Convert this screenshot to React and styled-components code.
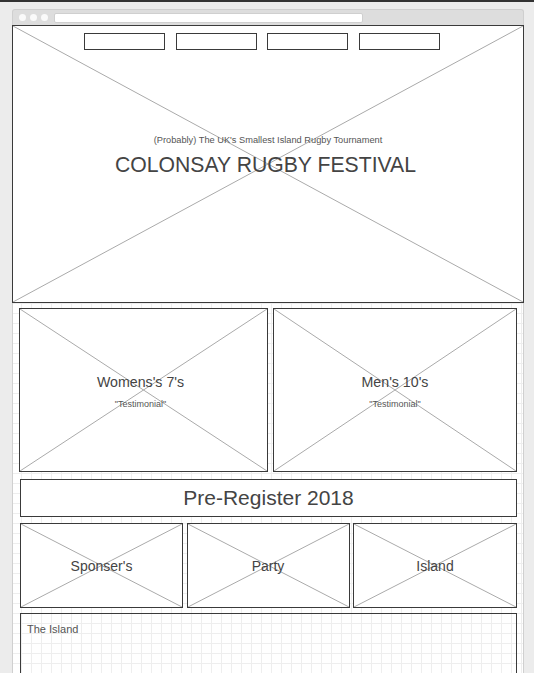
import React from "react";
import styled, { createGlobalStyle } from "styled-components";

const Global = createGlobalStyle`
  html, body {
    margin: 0;
    padding: 0;
    background: #ececec;
  }
  body {
    font-family: "Liberation Sans", Arial, sans-serif;
    color: #444;
  }
`;

const Page = styled.div`
  border-top: 2px solid #333;
  padding: 7px 10px 0 12px;
  height: 673px;
  overflow: hidden;
  box-sizing: border-box;
`;

const Frame = styled.div`
  width: 512px;
  display: flex;
  flex-direction: column;
`;

const TitleBar = styled.div`
  height: 16px;
  box-sizing: border-box;
  background: #dddddd;
  border: 1px solid #cfcfcf;
  border-bottom: none;
  border-radius: 3px 3px 0 0;
  display: flex;
  align-items: center;
  padding-left: 6px;
  gap: 4px;
`;

const Dot = styled.span`
  width: 7px;
  height: 7px;
  border-radius: 50%;
  background: #fafafa;
`;

const Address = styled.div`
  margin-left: 2px;
  width: 309px;
  height: 10px;
  background: #fff;
  border: 1px solid #cfcfcf;
  border-radius: 2px;
  box-sizing: border-box;
`;

const Hero = styled.div`
  position: relative;
  height: 278px;
  box-sizing: border-box;
  border: 1px solid #3a3a3a;
  background: #fff;
  display: flex;
  flex-direction: column;
`;

const CrossSvg = styled.svg`
  position: absolute;
  inset: 0;
  width: 100%;
  height: 100%;
  pointer-events: none;
`;

const Cross = () => (
  <CrossSvg preserveAspectRatio="none" viewBox="0 0 100 100">
    <line x1="0" y1="0" x2="100" y2="100" stroke="#aaa" strokeWidth="1" vectorEffect="non-scaling-stroke" />
    <line x1="100" y1="0" x2="0" y2="100" stroke="#aaa" strokeWidth="1" vectorEffect="non-scaling-stroke" />
  </CrossSvg>
);

const Nav = styled.div`
  position: relative;
  display: flex;
  gap: 10.7px;
  padding: 7px 0 0 71px;
`;

const NavBox = styled.div`
  width: 81px;
  height: 17px;
  box-sizing: border-box;
  border: 1px solid #3a3a3a;
  background: #fff;
`;

const HeroText = styled.div`
  position: relative;
  margin-top: 85px;
  display: flex;
  flex-direction: column;
  align-items: center;
  gap: 6px;
`;

const Tagline = styled.div`
  font-size: 9.25px;
  line-height: 11px;
  color: #555;
`;

const Title = styled.h1`
  margin: 0;
  padding-right: 5px;
  font-weight: normal;
  font-size: 21.2px;
  line-height: 26px;
  color: #444;
`;

const Content = styled.div`
  border-left: 1px solid #d0d0d0;
  border-right: 1px solid #d0d0d0;
  background-color: #fff;
  background-image:
    linear-gradient(to right, #eeeeee 1px, transparent 1px),
    linear-gradient(to bottom, #eeeeee 1px, transparent 1px);
  background-size: 10px 10px;
  background-position: 8px 0;
  padding: 5px 6px 0;
  display: flex;
  flex-direction: column;
  gap: 7px;
  height: 400px;
`;

const TwoCol = styled.div`
  display: grid;
  grid-template-columns: 249px 244px;
  gap: 5px;
`;

const Box = styled.div`
  position: relative;
  box-sizing: border-box;
  border: 1px solid #3a3a3a;
  background: ${p => (p.$clear ? "transparent" : "#fff")};
  height: ${p => p.$h}px;
  display: flex;
  flex-direction: column;
  align-items: center;
  justify-content: center;
  padding-right: ${p => p.$shift || 0}px;
`;

const CardTitle = styled.div`
  position: relative;
  font-size: 14.2px;
  line-height: 17px;
  color: #444;
  margin-top: 2px;
`;

const Testimonial = styled.div`
  position: relative;
  font-size: 9px;
  line-height: 10px;
  color: #555;
  margin-top: 8px;
`;

const Lower = styled.div`
  margin-left: 1px;
  display: flex;
  flex-direction: column;
  gap: 6px;
`;

const Banner = styled(Box)`
  font-size: 21px;
  color: #444;
`;

const ThreeCol = styled.div`
  display: grid;
  grid-template-columns: 163px 163px 164px;
  gap: 4px 3.5px;
`;

const TileLabel = styled.div`
  position: relative;
  font-size: 14px;
  color: #444;
`;

const Section = styled(Box)`
  align-items: flex-start;
  justify-content: flex-start;
  padding: 9px 6px;
  margin-top: -1px;
`;

const SectionLabel = styled.div`
  font-size: 11px;
  color: #555;
`;

const cards = [
  { title: "Womens's 7's", shift: 6 },
  { title: "Men's 10's", shift: 0 }
];

const tiles = ["Sponser's", "Party", "Island"];

export default function App() {
  return (
    <Page>
      <Global />
      <Frame>
        <TitleBar>
          <Dot />
          <Dot />
          <Dot />
          <Address />
        </TitleBar>
        <Hero>
          <Cross />
          <Nav>
            <NavBox />
            <NavBox />
            <NavBox />
            <NavBox />
          </Nav>
          <HeroText>
            <Tagline>(Probably) The UK's Smallest Island Rugby Tournament</Tagline>
            <Title>COLONSAY RUGBY FESTIVAL</Title>
          </HeroText>
        </Hero>
        <Content>
          <TwoCol>
            {cards.map(c => (
              <Box key={c.title} $h={164} $shift={c.shift}>
                <Cross />
                <CardTitle>{c.title}</CardTitle>
                <Testimonial>"Testimonial"</Testimonial>
              </Box>
            ))}
          </TwoCol>
          <Lower>
            <Banner $h={38}>Pre-Register 2018</Banner>
            <ThreeCol>
              {tiles.map(t => (
                <Box key={t} $h={85}>
                  <Cross />
                  <TileLabel>{t}</TileLabel>
                </Box>
              ))}
            </ThreeCol>
            <Section $h={120} $clear>
              <SectionLabel>The Island</SectionLabel>
            </Section>
          </Lower>
        </Content>
      </Frame>
    </Page>
  );
}
